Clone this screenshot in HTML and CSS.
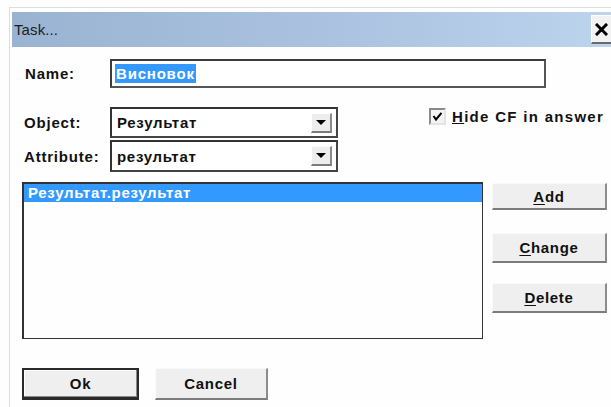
FILE: index.html
```html
<!DOCTYPE html>
<html lang="en">
<head>
<meta charset="utf-8">
<title>Task...</title>
<link rel="stylesheet" href="styles.css">
</head>
<body>
<div class="dialog">
  <div class="titlebar">
    <span class="title">Task...</span>
    <button class="close" type="button" aria-label="Close">
      <svg width="13" height="13" viewBox="0 0 13 13"><path d="M2 2 L11 11 M11 2 L2 11" stroke="#000" stroke-width="3" stroke-linecap="square"/></svg>
    </button>
  </div>
  <div class="content">
    <div class="row name-row">
      <label class="label">Name:</label>
      <div class="field name-field"><span class="sel-text">Висновок</span></div>
    </div>

    <div class="row object-row">
      <div class="selects">
        <div class="row">
          <label class="label">Object:</label>
          <div class="combo combo-obj"><span class="combo-text">Результат</span><span class="drop"><i class="tri"></i></span></div>
        </div>
        <div class="row attr-row">
          <label class="label">Attribute:</label>
          <div class="combo combo-attr"><span class="combo-text">результат</span><span class="drop"><i class="tri"></i></span></div>
        </div>
      </div>
      <div class="check">
        <span class="box">
          <svg width="11" height="11" viewBox="0 0 11 11"><path d="M1.5 5 L4 8.5 L9.5 1.8" fill="none" stroke="#000" stroke-width="2"/></svg>
        </span>
        <span class="check-text"><u>H</u>ide CF in answer</span>
      </div>
    </div>

    <div class="row list-row">
      <div class="list">
        <div class="item selected">Результат.результат</div>
      </div>
      <div class="side-buttons">
        <button class="btn btn-add" type="button"><u>A</u>dd</button>
        <button class="btn btn-change" type="button"><u>C</u>hange</button>
        <button class="btn btn-delete" type="button"><u>D</u>elete</button>
      </div>
    </div>

    <div class="row footer">
      <button class="btn btn-ok" type="button">Ok</button>
      <button class="btn btn-cancel" type="button">Cancel</button>
    </div>
  </div>
</div>
</body>
</html>
```

FILE: styles.css
```css
html, body {
  margin: 0;
  padding: 0;
  background: #fefefe;
  overflow: hidden;
}

body {
  width: 611px;
  height: 407px;
  padding: 7px 0 0 9px;
  box-sizing: border-box;
  font-family: "Liberation Sans", Arial, sans-serif;
  color: #111;
}

.dialog {
  border-top: 1px solid #dedede;
  border-left: 1px solid #dedede;
  padding: 4px 0 0 2px;
  height: 400px;
  box-sizing: border-box;
}

.titlebar {
  width: 606px;
  height: 35px;
  display: flex;
  align-items: center;
  justify-content: space-between;
  background: linear-gradient(to right, #9ab3d2, #adc5e2 60%, #bdd4ed);
  box-sizing: border-box;
  padding-left: 2px;
}

.title {
  font-size: 15px;
  color: #1c1c1c;
  letter-spacing: 0.1px;
}

.close {
  width: 27px;
  height: 29px;
  margin: 0;
  padding: 0 0 0 3px;
  background: #f2f2f2;
  border: 1px solid #fff;
  border-right-color: #808080;
  border-bottom: 2px solid #6a6a6a;
  display: flex;
  align-items: center;
  justify-content: flex-start;
  box-sizing: border-box;
}

.content {
  padding-left: 10px;
}

.row {
  display: flex;
  align-items: center;
}

.label {
  width: 88px;
  padding-left: 2px;
  box-sizing: border-box;
  font-weight: bold;
  font-size: 15px;
  letter-spacing: 0.8px;
  color: #111;
}

.name-row {
  margin-top: 12px;
}

.name-row .label {
  padding-left: 3px;
}

.field {
  width: 436px;
  height: 29px;
  border: 2px solid #3c3c3c;
  border-right-color: #555;
  border-bottom-color: #555;
  box-sizing: border-box;
  display: flex;
  align-items: center;
  padding-left: 3px;
  background: #fff;
}

.sel-text {
  background: #3399ff;
  color: #fff;
  font-weight: bold;
  font-size: 15px;
  letter-spacing: 0.8px;
  padding: 1px 1px;
  line-height: 17px;
}

.object-row {
  margin-top: 19px;
  align-items: flex-start;
}

.selects {
  display: flex;
  flex-direction: column;
}

.attr-row {
  margin-top: 2px;
}

.combo {
  width: 228px;
  border: 2px solid #333;
  border-right-color: #444;
  border-bottom-color: #444;
  box-sizing: border-box;
  display: flex;
  align-items: center;
  justify-content: space-between;
  padding: 0 4px 0 5px;
  background: #fff;
}

.combo-obj {
  height: 31px;
}

.combo-attr {
  height: 32px;
}

.combo-text {
  font-weight: bold;
  font-size: 15px;
  letter-spacing: 0.7px;
  color: #111;
}

.drop {
  width: 21px;
  height: 20px;
  background: #ededed;
  border: 1px solid #fff;
  border-right: 2px solid #8a8a8a;
  border-bottom: 2px solid #7a7a7a;
  box-sizing: border-box;
  display: flex;
  align-items: center;
  justify-content: center;
}

.tri {
  width: 0;
  height: 0;
  border-left: 5px solid transparent;
  border-right: 5px solid transparent;
  border-top: 5px solid #000;
}

.check {
  margin-left: 91px;
  margin-top: 1px;
  display: flex;
  align-items: center;
}

.box {
  width: 17px;
  height: 17px;
  box-sizing: border-box;
  border: 2px solid #8a8a8a;
  border-right-color: #e4e4e4;
  border-bottom-color: #e4e4e4;
  background: #f4f4f4;
  display: flex;
  align-items: center;
  justify-content: center;
}

.check-text {
  margin-left: 6px;
  font-weight: bold;
  font-size: 15px;
  letter-spacing: 1.3px;
  color: #111;
}

.list-row {
  margin-top: 10px;
  align-items: flex-start;
}

.list {
  width: 461px;
  height: 157px;
  border: 2px solid #333;
  border-right-width: 1px;
  border-bottom-width: 1px;
  box-sizing: border-box;
  background: #fefefe;
}

.item {
  height: 18px;
  line-height: 18px;
  padding-left: 4px;
  font-weight: bold;
  font-size: 15px;
  letter-spacing: 0.7px;
}

.item.selected {
  background: #3399ff;
  color: #fff;
}

.side-buttons {
  margin-left: 9px;
  margin-top: 1px;
  display: flex;
  flex-direction: column;
}

.btn {
  margin: 0;
  padding: 0;
  font-family: "Liberation Sans", Arial, sans-serif;
  font-weight: bold;
  font-size: 15px;
  letter-spacing: 0.7px;
  color: #111;
  background: #efefef;
  border: 1px solid #fafafa;
  border-right: 2px solid #8c8c8c;
  border-bottom: 2px solid #7c7c7c;
  box-sizing: border-box;
  cursor: default;
}

.btn u {
  text-underline-offset: 2px;
}

.side-buttons .btn {
  width: 115px;
}

.btn-add {
  height: 27px;
}

.btn-change {
  height: 30px;
  margin-top: 23px;
}

.btn-delete {
  height: 30px;
  margin-top: 20px;
}

.footer {
  margin-top: 29px;
  gap: 16px;
}

.btn-ok {
  width: 117px;
  height: 32px;
  border: 2px solid #2a2a2a;
  border-bottom-width: 3px;
  box-shadow: inset -1px -1px 0 #8a8a8a, inset 1px 1px 0 #fff;
}

.btn-cancel {
  width: 113px;
  height: 32px;
}
```
